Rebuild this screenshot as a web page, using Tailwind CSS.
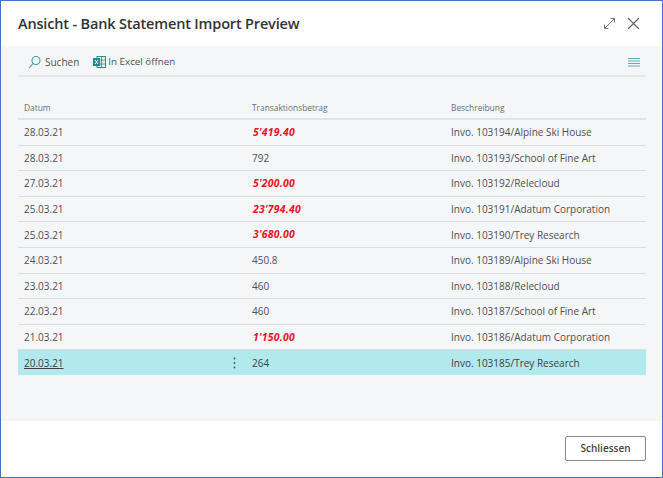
<!DOCTYPE html>
<html lang="de">
  <head>
    <meta charset="UTF-8" />
    <title>Bank Statement Import Preview</title>
    <script src="https://cdn.jsdelivr.net/npm/@tailwindcss/browser@4"></script>
  </head>
  <body class="bg-white">
    <div class="w-[663px] h-[478px] flex flex-col overflow-hidden border border-[#4472c4] bg-white text-[#505050] font-['Open_Sans',sans-serif] text-[10px]">
      <!-- Title -->
      <div class="h-[45px] shrink-0 flex items-center justify-between pl-[17px] pr-[22px]">
        <h1 class="text-[14.5px] font-semibold text-[#333] tracking-[-0.17px]">Ansicht - Bank Statement Import Preview</h1>
        <div class="flex items-center gap-[11px]">
          <svg width="13" height="13" viewBox="0 0 13 13" fill="none" stroke="#777" stroke-width="1"><path d="M1.5 11.5 11.5 1.5M7.5 1.5H11.5V5.5M1.5 7.5V11.5H5.5"/></svg>
          <svg width="13" height="13" viewBox="0 0 13 13" fill="none" stroke="#666" stroke-width="1.2"><path d="M1 1 12 12M12 1 1 12"/></svg>
        </div>
      </div>

      <!-- Content -->
      <div class="h-[375px] shrink-0 bg-[#f5f6f8] pl-[17px] pr-[16px] flex flex-col">
        <!-- Toolbar -->
        <div class="h-[31px] shrink-0 flex items-center pt-[3px] border-b-2 border-[#e6e7e9]">
          <div class="flex items-center gap-[4px] ml-[10px]">
            <svg width="13" height="14" viewBox="0 0 13 14" fill="none" stroke="#3f9ba0" stroke-width="1.1"><circle cx="8" cy="5.5" r="4"/><path d="M5 8.5 1 13"/></svg>
            <span>Suchen</span>
          </div>
          <div class="flex items-center gap-[2px] ml-[14px]">
            <svg width="13" height="12" viewBox="0 0 13 12"><rect x="4" y="0.5" width="8.5" height="11" fill="#e4f3f1" stroke="#2f8f82"/><path d="M4 4H12.5M4 8H12.5M8.5 0.5V11.5" stroke="#2f8f82" stroke-width="0.8"/><rect x="0" y="2" width="7" height="8" fill="#1f8a96"/><path d="M2 4 5 8M5 4 2 8" stroke="#fff" stroke-width="0.9"/></svg>
            <span class="text-[9.8px]">In Excel öffnen</span>
          </div>
          <svg class="ml-auto mr-[6px]" width="12" height="9" viewBox="0 0 12 9" fill="none" stroke="#55b4b8"><path d="M0 .5H12M0 3H12M0 5.5H12M0 8H12"/></svg>
        </div>

        <!-- Table -->
        <div id="table">
          <div class="h-[43px] grid grid-cols-[228px_199px_1fr] items-end pb-[3px] pl-[6px] text-[8.4px] text-[#6b6f76] border-b-2 border-[#e2e3e5]">
            <span>Datum</span><span>Transaktionsbetrag</span><span>Beschreibung</span>
          </div>
          <div class="h-[25.6px] pt-[1px] grid grid-cols-[228px_199px_1fr] items-center pl-[6px] border-b border-[#dcdddf]"><span>28.03.21</span><span class="pl-[1px] text-[10.4px] font-bold italic tracking-[0.25px] text-[#e81123]">5'419.40</span><span>Invo. 103194/Alpine Ski House</span></div>
          <div class="h-[25.6px] pt-[1px] grid grid-cols-[228px_199px_1fr] items-center pl-[6px] border-b border-[#dcdddf]"><span>28.03.21</span><span>792</span><span>Invo. 103193/School of Fine Art</span></div>
          <div class="h-[25.6px] pt-[1px] grid grid-cols-[228px_199px_1fr] items-center pl-[6px] border-b border-[#dcdddf]"><span>27.03.21</span><span class="pl-[1px] text-[10.4px] font-bold italic tracking-[0.25px] text-[#e81123]">5'200.00</span><span>Invo. 103192/Relecloud</span></div>
          <div class="h-[25.6px] pt-[1px] grid grid-cols-[228px_199px_1fr] items-center pl-[6px] border-b border-[#dcdddf]"><span>25.03.21</span><span class="pl-[1px] text-[10.4px] font-bold italic tracking-[0.25px] text-[#e81123]">23'794.40</span><span>Invo. 103191/Adatum Corporation</span></div>
          <div class="h-[25.6px] pt-[1px] grid grid-cols-[228px_199px_1fr] items-center pl-[6px] border-b border-[#dcdddf]"><span>25.03.21</span><span class="pl-[1px] text-[10.4px] font-bold italic tracking-[0.25px] text-[#e81123]">3'680.00</span><span>Invo. 103190/Trey Research</span></div>
          <div class="h-[25.6px] pt-[1px] grid grid-cols-[228px_199px_1fr] items-center pl-[6px] border-b border-[#dcdddf]"><span>24.03.21</span><span>450.8</span><span>Invo. 103189/Alpine Ski House</span></div>
          <div class="h-[25.6px] pt-[1px] grid grid-cols-[228px_199px_1fr] items-center pl-[6px] border-b border-[#dcdddf]"><span>23.03.21</span><span>460</span><span>Invo. 103188/Relecloud</span></div>
          <div class="h-[25.6px] pt-[1px] grid grid-cols-[228px_199px_1fr] items-center pl-[6px] border-b border-[#dcdddf]"><span>22.03.21</span><span>460</span><span>Invo. 103187/School of Fine Art</span></div>
          <div class="h-[25.6px] pt-[1px] grid grid-cols-[228px_199px_1fr] items-center pl-[6px] border-b border-[#dcdddf]"><span>21.03.21</span><span class="pl-[1px] text-[10.4px] font-bold italic tracking-[0.25px] text-[#e81123]">1'150.00</span><span>Invo. 103186/Adatum Corporation</span></div>
          <div class="h-[25px] pt-[1px] grid grid-cols-[228px_199px_1fr] items-center pl-[6px] bg-[#b2e9ec] text-[#404040]">
            <span class="flex items-center justify-between pr-[16px]"><span class="underline">20.03.21</span><svg width="3" height="12" viewBox="0 0 3 12" fill="#555"><circle cx="1.5" cy="1.5" r="0.9"/><circle cx="1.5" cy="6" r="0.9"/><circle cx="1.5" cy="10.5" r="0.9"/></svg></span>
            <span>264</span><span>Invo. 103185/Trey Research</span>
          </div>
        </div>
      </div>

      <!-- Footer -->
      <div class="flex-1 flex items-start justify-end pt-[15px] pr-[16px]">
        <button class="w-[81px] h-[25px] bg-white border border-[#8a8a8a] rounded-[2px] text-[10px] font-semibold text-[#444]">Schliessen</button>
      </div>
    </div>
  </body>
</html>
